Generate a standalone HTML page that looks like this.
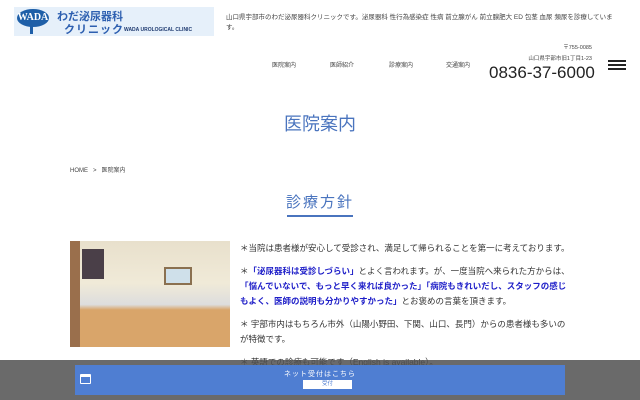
<!DOCTYPE html>
<html><head><meta charset="utf-8"><style>
*{margin:0;padding:0;box-sizing:border-box}
body{width:640px;height:400px;overflow:hidden;background:#fff;font-family:"Liberation Sans","Noto Sans CJK JP",sans-serif;color:#333;position:relative}
.a{position:absolute;white-space:nowrap}
</style></head><body>
<div class="a" style="left:14px;top:7px;width:200px;height:29px;background:#e6f0fa"></div>
<div class="a" style="left:17px;top:9px;width:32px;height:18px;border-radius:50%;background:#1e5fa8;color:#fff;font-size:10px;font-weight:bold;text-align:center;line-height:18px;font-family:'Liberation Serif',serif">WADA</div>
<div class="a" style="left:30px;top:26px;width:3px;height:8px;background:#1e5fa8"></div>
<div class="a" style="left:57px;top:8px;font-size:11px;font-weight:bold;color:#2d5fb0">わだ泌尿器科</div>
<div class="a" style="left:64px;top:21px;font-size:11px;font-weight:bold;color:#2d5fb0;letter-spacing:1px">クリニック</div>
<div class="a" style="left:124px;top:27px;font-size:5px;font-weight:bold;color:#1e3a70">WADA UROLOGICAL CLINIC</div>
<div class="a" style="left:226px;top:13px;font-size:6.5px;line-height:9.5px;color:#444;white-space:normal;width:388px">山口県宇部市のわだ泌尿器科クリニックです。泌尿器科 性行為感染症 性病 前立腺がん 前立腺肥大 ED 包茎 血尿 頻尿を診療しています。</div>
<div class="a" style="left:272px;top:60px;font-size:6px;color:#444">医院案内</div>
<div class="a" style="left:330px;top:60px;font-size:6px;color:#444">医師紹介</div>
<div class="a" style="left:389px;top:60px;font-size:6px;color:#444">診療案内</div>
<div class="a" style="left:446px;top:60px;font-size:6px;color:#444">交通案内</div>
<div class="a" style="right:48px;top:43px;font-size:5.5px;color:#444">〒755-0085</div>
<div class="a" style="right:48px;top:54px;font-size:5.5px;color:#444">山口県宇部市旧1丁目1-23</div>
<div class="a" style="left:489px;top:63px;font-size:17px;color:#222">0836-37-6000</div>
<div class="a" style="left:608px;top:60px;width:18px;height:2px;background:#222;box-shadow:0 4px 0 #222,0 8px 0 #222"></div>
<div class="a" style="left:0;width:640px;top:110px;text-align:center;font-size:18px;color:#4a74be">医院案内</div>
<div class="a" style="left:70px;top:165px;font-size:6px;color:#444">HOME &nbsp;&nbsp;&gt;&nbsp;&nbsp; 医院案内</div>
<div class="a" style="left:0;width:640px;top:191px;text-align:center;font-size:15px;color:#4a74be;letter-spacing:2px">診療方針</div>
<div class="a" style="left:287px;top:215px;width:66px;height:2px;background:#4a74be"></div>
<div class="a" style="left:70px;top:241px;width:160px;height:106px;background:linear-gradient(180deg,#e8e0cc 0,#f0ead8 40%,#ddd 60%,#d9a56a 65%,#d9a56a 100%)">
<div class="a" style="left:12px;top:8px;width:22px;height:30px;background:#4a3f48"></div>
<div class="a" style="left:94px;top:26px;width:28px;height:18px;background:#cfe0ea;border:2px solid #8a7050"></div>
<div class="a" style="left:0;top:0;width:10px;height:106px;background:#9a6f4c"></div>
</div>
<div class="a" style="left:240px;top:241px;font-size:8.5px;line-height:15px;color:#333;white-space:normal;width:330px">
<p style="margin-bottom:8px">＊当院は患者様が安心して受診され、満足して帰られることを第一に考えております。</p>
<p style="margin-bottom:8px">＊<b style="color:#1e1ec8">「泌尿器科は受診しづらい」</b>とよく言われます。が、一度当院へ来られた方からは、<b style="color:#1e1ec8">「悩んでいないで、もっと早く来れば良かった」「病院もきれいだし、スタッフの感じもよく、医師の説明も分かりやすかった」</b>とお褒めの言葉を頂きます。</p>
<p style="margin-bottom:8px">＊ 宇部市内はもちろん市外（山陽小野田、下関、山口、長門）からの患者様も多いのが特徴です。</p>
<p>＊ 英語での診療も可能です（English is available）。</p>
</div>
<div class="a" style="left:0;top:360px;width:640px;height:40px;background:rgba(80,80,80,.85)"></div>
<div class="a" style="left:75px;top:365px;width:490px;height:30px;background:#4f7ed2"></div>
<div class="a" style="left:80px;top:374px;width:11px;height:10px;border:1.5px solid #fff;border-top-width:3px;border-radius:1px"></div>
<div class="a" style="left:0;width:640px;top:369px;text-align:center;font-size:7px;color:#fff;letter-spacing:1px">ネット受付はこちら</div>
<div class="a" style="left:303px;top:380px;width:49px;height:9px;background:#fff;color:#4f7ed2;font-size:5.5px;text-align:center;line-height:9px">受付</div>
</body></html>
